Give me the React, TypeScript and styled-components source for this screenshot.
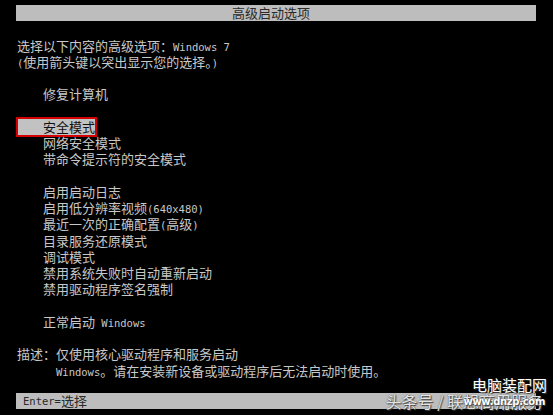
import styled, { createGlobalStyle } from 'styled-components'

const LINE = 16.25

const GlobalStyle = createGlobalStyle`
   html, body {
      margin: 0;
      padding: 0;
      background: #000;
   }
   body {
      font-family: "Noto Sans CJK SC", "DejaVu Sans", sans-serif;
      font-size: 13px;
      color: #c8c8c8;
   }
`

const Screen = styled.div`
   position: relative;
   display: flex;
   flex-direction: column;
   height: 415px;
   box-sizing: border-box;
   padding: 5px 17px 6px 16px;
   overflow: hidden;
   background: #000;
`

const Bar = styled.div<{ center?: boolean }>`
   display: flex;
   align-items: center;
   justify-content: ${({ center }) => (center ? 'center' : 'flex-start')};
   height: ${LINE}px;
   padding-left: ${({ center }) => (center ? '0' : '7px')};
   padding-right: ${({ center }) => (center ? '10px' : '0')};
   background: #bdbdbd;
   color: #2a2a2a;
   line-height: ${LINE}px;
`

const Footer = styled(Bar)`
   margin-top: auto;
`

const Section = styled.div`
   margin-top: ${LINE}px;
`

const Line = styled.div<{ indent?: number }>`
   height: ${LINE}px;
   line-height: ${LINE}px;
   padding-left: ${({ indent }) => indent ?? 1}px;
   white-space: nowrap;
`

const Selected = styled.div`
   width: fit-content;
   height: ${LINE}px;
   line-height: ${LINE}px;
   margin: -2px 0;
   padding-left: 25px;
   border: 2px solid #d40000;
   background: #c2c2c2;
   color: #111;
   white-space: nowrap;
`

const Mono = styled.span`
   font-family: "DejaVu Sans Mono", "Liberation Mono", monospace;
   font-size: 10.5px;
`

const Desc = styled.div`
   display: flex;
   padding-left: 1px;
   line-height: ${LINE}px;
`

const DescLabel = styled.div`
   width: 39px;
   flex: none;
`

const DescText = styled.div`
   white-space: nowrap;
`

const Mark = styled.div<{ top: number; right: number; size: number; tone: string }>`
   position: absolute;
   top: ${({ top }) => top}px;
   right: ${({ right }) => right}px;
   font-size: ${({ size }) => size}px;
   line-height: 1;
   color: ${({ tone }) => tone};
   white-space: nowrap;
   text-shadow: 0 0 1px #333, 1px 1px 1px #444;
`

const Site = styled(Mark)`
   font-family: "DejaVu Sans", sans-serif;
   font-weight: bold;
   letter-spacing: -0.3px;
`

const items = [
   '启用启动日志',
   <>启用低分辨率视频<Mono>(640x480)</Mono></>,
   <>最近一次的正确配置<Mono>(</Mono>高级<Mono>)</Mono></>,
   '目录服务还原模式',
   '调试模式',
   '禁用系统失败时自动重新启动',
   '禁用驱动程序签名强制',
]

export default function App() {
   return (
      <>
         <GlobalStyle />
         <Screen>
            <Bar center>高级启动选项</Bar>
            <Section>
               <Line>选择以下内容的高级选项：<Mono>Windows 7</Mono></Line>
               <Line><Mono>(</Mono>使用箭头键以突出显示您的选择。<Mono>)</Mono></Line>
            </Section>
            <Section>
               <Line indent={27}>修复计算机</Line>
            </Section>
            <Section>
               <Selected>安全模式</Selected>
               <Line indent={27}>网络安全模式</Line>
               <Line indent={27}>带命令提示符的安全模式</Line>
            </Section>
            <Section>
               {items.map((item, i) => (
                  <Line key={i} indent={27}>{item}</Line>
               ))}
            </Section>
            <Section>
               <Line indent={27}>正常启动<Mono> Windows</Mono></Line>
            </Section>
            <Section>
               <Desc>
                  <DescLabel>描述：</DescLabel>
                  <DescText>
                     仅使用核心驱动程序和服务启动
                     <br />
                     <Mono>Windows</Mono>。请在安装新设备或驱动程序后无法启动时使用。
                  </DescText>
               </Desc>
            </Section>
            <Footer>
               <Mono>Enter=</Mono>选择
            </Footer>
            <Mark top={377} right={6} size={15} tone="#fff">电脑装配网</Mark>
            <Mark top={393} right={10} size={16} tone="#e4e4e4">头条号 / 联想商用服务</Mark>
            <Site top={397} right={8} size={10} tone="#fff">www.dnzp.com</Site>
         </Screen>
      </>
   )
}
